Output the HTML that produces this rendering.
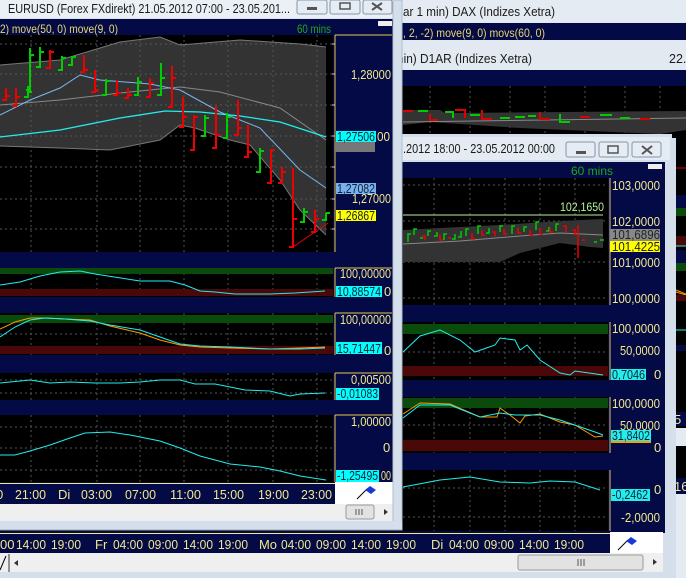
<!DOCTYPE html>
<html><head><meta charset="utf-8"><style>
html,body{margin:0;padding:0;background:#dfe7f0;width:686px;height:578px;overflow:hidden}
svg{display:block}
text{font-family:"Liberation Sans",sans-serif;font-size:12px}
.y{fill:#f2e88c;font-size:13px}
.k{fill:#123;font-size:13px}
.t{fill:#1a1a1a;font-size:12.5px}
</style></head><body>
<svg width="686" height="578" viewBox="0 0 686 578" xmlns="http://www.w3.org/2000/svg">
<rect x="0" y="0" width="686" height="578" fill="#dfe7f0"/>
<rect x="400" y="0" width="286" height="22" fill="#e4ebf2"/>
<text x="403" y="16" class="t" textLength="152" lengthAdjust="spacingAndGlyphs">ar 1 min)  DAX (Indizes Xetra)</text>
<rect x="400" y="23" width="286" height="17" fill="#030a45"/>
<text x="403" y="37" style="fill:#e8d870" textLength="142" lengthAdjust="spacingAndGlyphs">, 2, -2) move(9, 0) movs(60, 0)</text>
<rect x="400" y="41" width="286" height="28" fill="#e2e9f1"/>
<text x="397" y="63" class="t" textLength="135" lengthAdjust="spacingAndGlyphs">nin)  D1AR (Indizes Xetra)</text>
<text x="669" y="63" class="t">22.</text>
<rect x="400" y="70" width="286" height="16" fill="#030a45"/>
<rect x="400" y="86" width="286" height="52" fill="#000"/>
<g stroke="#555" stroke-dasharray="2,3"><path d="M430 86v52M470 86v52M510 86v52M545 86v52M585 86v52M625 86v52M660 86v52"/></g>
<path d="M403 110 L440 110 L445 113 L686 111 L686 130 L660 134 L520 128 L430 122 L403 125Z" fill="#333"/>
<path d="M403 122 L686 118" stroke="#888" fill="none"/>
<path d="M403 111h10M430 114v6h8M455 110h10v8M482 110v9h10M540 112v7h10M580 117h10M640 119h10" stroke="#d00" stroke-width="2" fill="none"/>
<path d="M418 111h10M445 112h8v6M470 115h10M500 118h10M515 117h10M528 116h8M560 114v8h10M600 115h12M620 118h10" stroke="#0c0" stroke-width="2" fill="none"/>
<rect x="676" y="138" width="10" height="440" fill="#000"/>
<path d="M676 168h10" stroke="#d00"/>
<rect x="676" y="195" width="10" height="20" fill="#030a45"/>
<rect x="676" y="208" width="10" height="8" fill="#0a4a0a"/>
<rect x="676" y="236" width="10" height="10" fill="#4a0808"/>
<path d="M676 246h10" stroke="#2ee"/>
<rect x="676" y="250" width="10" height="13" fill="#030a45"/>
<rect x="676" y="263" width="10" height="8" fill="#0a4a0a"/>
<path d="M676 290l10 4M676 292l10 3" stroke="#f90"/>
<rect x="676" y="295" width="10" height="6" fill="#4a0808"/>
<path d="M676 330h10" stroke="#2ee"/>
<rect x="676" y="345" width="10" height="6" fill="#030a45"/>
<rect x="676" y="412" width="10" height="14" fill="#030a45"/>
<text x="674" y="424" class="y">5</text>
<rect x="676" y="428" width="10" height="18" fill="#e4ebf2"/>
<rect x="676" y="478" width="10" height="16" fill="#030a45"/>
<text x="674" y="491" class="y">16</text>
<rect x="676" y="494" width="10" height="84" fill="#e4ebf2"/>
<rect x="670" y="138" width="6" height="440" fill="#d4dfeb"/>

<!-- middle window -->
<rect x="0" y="134" width="672" height="444" fill="#d4dfeb"/>
<rect x="400" y="137" width="270" height="23" fill="#e4ebf2"/>
<text x="403" y="153" class="t" textLength="152" lengthAdjust="spacingAndGlyphs">.2012 18:00 - 23.05.2012 00:00</text>
<g fill="#e6ecf3" stroke="#8795a8"><rect x="566" y="142" width="29" height="15" rx="2"/><rect x="599" y="142" width="29" height="15" rx="2"/><rect x="632" y="142" width="29" height="15" rx="2"/></g>
<rect x="576" y="151" width="10" height="3" fill="#555"/>
<rect x="608" y="146" width="10" height="7" fill="none" stroke="#555" stroke-width="1.5"/>
<path d="M642 146l10 8M652 146l-10 8" stroke="#555" stroke-width="2"/>
<rect x="0" y="162" width="665" height="371" fill="#030a45"/>
<text x="571" y="175" style="fill:#1ca81c" textLength="42" lengthAdjust="spacingAndGlyphs">60 mins</text>
<rect x="648" y="164" width="14" height="5" fill="#eee"/>
<rect x="0" y="178" width="608" height="127" fill="#000"/>
<rect x="0" y="322" width="608" height="58" fill="#000"/>
<rect x="0" y="397" width="608" height="56" fill="#000"/>
<rect x="0" y="470" width="608" height="61" fill="#000"/>
<g stroke="#555" stroke-dasharray="2,3">
<path d="M434 178v127M470 178v127M505 178v127M540 178v127M575 178v127M403 185h205M403 221h205M403 262h205M403 298h205"/>
<path d="M434 322v58M470 322v58M505 322v58M540 322v58M575 322v58M403 352h205"/>
<path d="M434 397v56M470 397v56M505 397v56M540 397v56M575 397v56M403 425h205"/>
<path d="M434 470v61M470 470v61M505 470v61M540 470v61M575 470v61M403 488h205M403 517h205"/>
</g>
<path d="M403 230 L440 228 L500 225 L560 221 L603 219 L603 248 L590 247 L560 243 L520 253 L500 262 L403 262Z" fill="#333"/>
<path d="M403 244 L460 241 L520 236 L560 233 L603 235" stroke="#888" fill="none"/>
<path d="M403 215h200" stroke="#b8f0a0"/>
<text x="560" y="211" style="fill:#b8f0a0" textLength="44" lengthAdjust="spacingAndGlyphs">102,1650</text>
<g stroke-width="1.5" fill="none">
<path stroke="#0c0" d="M408 242v-8h3M414 235v-6h3M420 238h3M428 236v-5h3M434 236h3v-4M444 240v-6h3M452 239h3v-5M458 237h3v-6M466 236v-7h3M478 234v-8h3M486 233h3v-5M500 232v-6h3M512 234v-8h3M524 232v-5h3M536 230v-8h3M546 231h3v-4M556 231v-7h3M594 242h3M600 240h4"/>
<path stroke="#e00" d="M422 236h3v4M440 234v6h3M448 238h3M472 233v6h3M482 230v5h3M492 232h3v4M504 229v5h3M518 228v5h3M530 230v5h3M540 228v6h3M550 228v4h3M563 226h3v6M572 230h3v5M578 225v33M582 240h3"/>
</g>
<rect x="403" y="324" width="205" height="10" fill="#0a4a0a"/>
<rect x="403" y="366" width="205" height="10" fill="#4a0808"/>
<polyline fill="none" stroke="#2ee" points="403,352 420,336 440,330 460,340 475,352 495,345 500,338 515,340 520,350 527,345 540,360 560,373 570,375 575,371 603,375"/>
<rect x="403" y="398" width="205" height="10" fill="#0a4a0a"/>
<rect x="403" y="440" width="205" height="11" fill="#4a0808"/>
<polyline fill="none" stroke="#f90" points="403,414 420,403 450,404 480,417 497,417 500,408 510,415 520,423 525,416 540,414 560,422 575,425 595,437 603,436"/>
<polyline fill="none" stroke="#2ee" points="403,418 420,405 450,405 480,417 500,413 515,415 540,415 560,420 595,432 603,435"/>
<polyline fill="none" stroke="#2ee" points="403,487 440,480 470,477 500,482 530,483 550,481 575,482 600,490"/>
<g fill="none" stroke="#e8c850"><path d="M610 178v127M610 322v58M610 397v56M610 470v61"/></g>
<text x="612" y="190" class="y" textLength="48" lengthAdjust="spacingAndGlyphs">103,0000</text>
<text x="612" y="226" class="y" textLength="48" lengthAdjust="spacingAndGlyphs">102,0000</text>
<rect x="610" y="229" width="50" height="12" fill="#888"/>
<text x="612" y="239" style="fill:#222;font-size:13px" textLength="48" lengthAdjust="spacingAndGlyphs">101,6896</text>
<rect x="610" y="241" width="50" height="11" fill="#ff0"/>
<text x="612" y="251" style="fill:#222;font-size:13px" textLength="48" lengthAdjust="spacingAndGlyphs">101,4225</text>
<text x="612" y="267" class="y" textLength="48" lengthAdjust="spacingAndGlyphs">101,0000</text>
<text x="612" y="303" class="y" textLength="48" lengthAdjust="spacingAndGlyphs">100,0000</text>
<text x="612" y="333" class="y" textLength="48" lengthAdjust="spacingAndGlyphs">100,0000</text>
<text x="620" y="355" class="y" textLength="40" lengthAdjust="spacingAndGlyphs">50,0000</text>
<rect x="611" y="369" width="35" height="11" fill="#2ee"/>
<text x="612" y="379" class="k" textLength="33" lengthAdjust="spacingAndGlyphs">0,7046</text>
<text x="654" y="379" class="y">0</text>
<text x="612" y="408" class="y" textLength="48" lengthAdjust="spacingAndGlyphs">100,0000</text>
<text x="620" y="430" class="y" textLength="40" lengthAdjust="spacingAndGlyphs">50,0000</text>
<rect x="611" y="430" width="40" height="12" fill="#2ee"/>
<rect x="611" y="441" width="40" height="2" fill="#f90"/>
<text x="612" y="440" class="k" textLength="38" lengthAdjust="spacingAndGlyphs">31,8402</text>
<text x="654" y="452" class="y">0</text>
<text x="654" y="494" class="y">0</text>
<rect x="611" y="489" width="39" height="12" fill="#2ee"/>
<text x="612" y="499" class="k" textLength="36" lengthAdjust="spacingAndGlyphs">-0,2462</text>
<text x="621" y="522" class="y" textLength="39" lengthAdjust="spacingAndGlyphs">-2,0000</text>
<rect x="0" y="531" width="610" height="22" fill="#030a45"/>
<path d="M0 533.5h610" stroke="#f2e88c"/>
<rect x="610" y="532" width="53" height="21" fill="#fff"/>
<path d="M618 550l10-10" stroke="#000"/><path d="M626 541l5-4 6 4-5 4z" fill="#1838d8"/>
<g class="y">
<text x="0" y="549" class="y">00</text>
<text x="16" y="549" class="y" textLength="30" lengthAdjust="spacingAndGlyphs">14:00</text>
<text x="51" y="549" class="y" textLength="30" lengthAdjust="spacingAndGlyphs">19:00</text>
<text x="95" y="549" class="y">Fr</text>
<text x="113" y="549" class="y" textLength="30" lengthAdjust="spacingAndGlyphs">04:00</text>
<text x="148" y="549" class="y" textLength="30" lengthAdjust="spacingAndGlyphs">09:00</text>
<text x="183" y="549" class="y" textLength="30" lengthAdjust="spacingAndGlyphs">14:00</text>
<text x="218" y="549" class="y" textLength="30" lengthAdjust="spacingAndGlyphs">19:00</text>
<text x="259" y="549" class="y" textLength="18" lengthAdjust="spacingAndGlyphs">Mo</text>
<text x="281" y="549" class="y" textLength="30" lengthAdjust="spacingAndGlyphs">04:00</text>
<text x="316" y="549" class="y" textLength="30" lengthAdjust="spacingAndGlyphs">09:00</text>
<text x="351" y="549" class="y" textLength="30" lengthAdjust="spacingAndGlyphs">14:00</text>
<text x="386" y="549" class="y" textLength="30" lengthAdjust="spacingAndGlyphs">19:00</text>
<text x="431" y="549" class="y">Di</text>
<text x="449" y="549" class="y" textLength="30" lengthAdjust="spacingAndGlyphs">04:00</text>
<text x="484" y="549" class="y" textLength="30" lengthAdjust="spacingAndGlyphs">09:00</text>
<text x="519" y="549" class="y" textLength="30" lengthAdjust="spacingAndGlyphs">14:00</text>
<text x="554" y="549" class="y" textLength="30" lengthAdjust="spacingAndGlyphs">19:00</text>
</g>
<rect x="0" y="553" width="663" height="19" fill="#efefef"/>
<rect x="518" y="555" width="125" height="15" rx="2" fill="#e2e2e2" stroke="#999"/>
<path d="M578 559v7M581 559v7M584 559v7" stroke="#555"/>
<path d="M653 559l4 3-4 3z" fill="#333"/>
<path d="M18 560l-4 3 4 3z" fill="#333"/>
<path d="M0 570l6-14" stroke="#000"/><path d="M9 554v18" stroke="#333"/>

<!-- left window -->
<rect x="0" y="0" width="402" height="530" fill="#d8e2ee"/>
<rect x="0" y="0" width="395" height="18" fill="#eaf0f6"/>
<text x="8" y="13" class="t" textLength="282" lengthAdjust="spacingAndGlyphs">EURUSD (Forex FXdirekt) 21.05.2012 07:00 - 23.05.201...</text>
<g fill="#e6ecf3" stroke="#8795a8"><rect x="297" y="0" width="30" height="14" rx="2"/><rect x="330" y="0" width="30" height="14" rx="2"/><rect x="363" y="0" width="29" height="14" rx="2"/></g>
<rect x="307" y="7" width="10" height="3" fill="#555"/>
<rect x="340" y="3" width="10" height="6" fill="none" stroke="#555" stroke-width="1.5"/>
<path d="M372 3l10 7M382 3l-10 7" stroke="#555" stroke-width="2"/>
<rect x="0" y="19" width="393" height="463" fill="#030a45"/>
<text x="0" y="33" style="fill:#e8d870" textLength="118" lengthAdjust="spacingAndGlyphs">2) move(50, 0) move(9, 0)</text>
<text x="297" y="33" style="fill:#1ca81c" textLength="34" lengthAdjust="spacingAndGlyphs">60 mins</text>
<rect x="378" y="21" width="14" height="5" fill="#eee"/>
<rect x="0" y="35" width="333" height="217" fill="#000"/>
<rect x="0" y="268" width="333" height="29" fill="#000"/>
<rect x="0" y="313" width="333" height="42" fill="#000"/>
<rect x="0" y="373" width="333" height="27" fill="#000"/>
<rect x="0" y="415" width="333" height="67" fill="#000"/>
<path d="M0 65 L60 60 L120 42 L160 37 L180 45 L240 40 L300 44 L326 47 L326 235 L300 210 L280 180 L250 145 L230 140 L195 128 L180 125 L160 140 L110 150 L60 148 L0 146Z" fill="#333"/>
<g stroke="#555" stroke-dasharray="2,3">
<path d="M31 35v217M97 35v217M140 35v217M184 35v217M228 35v217M273 35v217M317 35v217M0 44h333M0 74h333M0 105h333M0 136h333M0 167h333M0 199h333M0 229h333"/>
<path d="M31 268v29M97 268v29M140 268v29M184 268v29M228 268v29M273 268v29M317 268v29"/>
<path d="M31 313v42M97 313v42M140 313v42M184 313v42M228 313v42M273 313v42M317 313v42M0 334h333"/>
<path d="M31 373v27M97 373v27M140 373v27M184 373v27M228 373v27M273 373v27M317 373v27M0 380h333M0 393h333"/>
<path d="M31 415v67M97 415v67M140 415v67M184 415v67M228 415v67M273 415v67M317 415v67M0 427h333M0 448h333M0 470h333"/>
</g>
<path d="M0 65 L60 60 L120 42 L160 37 L180 45 L240 40 L300 44 L326 47" stroke="#777" fill="none"/>
<path d="M0 146 L60 148 L110 150 L160 140 L180 125 L195 128 L230 140 L250 145 L280 180 L300 210 L326 235" stroke="#777" fill="none"/>
<path d="M0 105 L60 100 L120 93 L180 87 L220 92 L280 108 L326 140" stroke="#888" fill="none"/>
<path d="M0 115 L30 100 L60 88 L80 75 L100 80 L150 84 L180 90 L220 112 L260 128 L300 170 L326 188" stroke="#79b8f0" fill="none"/>
<path d="M0 137 L60 130 L120 118 L165 111 L200 112 L240 116 L280 122 L326 137" stroke="#2ee" fill="none" stroke-width="1.3"/>
<g stroke-width="2" fill="none">
<path stroke="#e00" d="M6 88v12h-4M6 96h4M16 88v18h-4M16 97h4M50 50v18h-4M50 52h4M84 55v17h-4M84 70h4M95 70v22h-4M95 90h4M117 80v15h-4M117 93h4M128 88v10h-4M128 95h4M150 78v19h-4M150 83h4M172 66v41h-4M172 78h4M183 97v30h-4M183 117h4M194 115v35h-4M194 117h4M216 106v42h-4M216 135h4M238 100v35h-4M238 128h4M248 125v32h-4M248 152h4M271 149v34h-4M271 150h4M282 167v16h-4M282 172h4M293 168v79h-4M293 219h4M315 210v22h-4M315 219h4"/>
<path stroke="#0c0" d="M28 86v11h-4M28 92h4M30 48v42h-4M30 55h4M40 47v20h-4M40 52h4M62 56v14h-4M62 58h4M72 56v9h-4M72 57h4M106 79v16h-4M106 81h4M138 77v18h-4M138 82h4M161 63v32h-4M161 78h4M205 115v21h-4M205 118h4M227 113v25h-4M227 117h4M260 148v24h-4M260 151h4M304 208v14h-4M304 212h4M326 213v7h-4M326 213h4"/>
</g>
<path d="M293 247 L328 223" stroke="#e00"/>
<rect x="0" y="268" width="333" height="6" fill="#0a4a0a"/>
<rect x="0" y="289" width="333" height="7" fill="#4a0808"/>
<polyline fill="none" stroke="#2ee" points="0,285 20,282 40,276 60,272 80,271 95,274 140,281 170,281 185,285 200,291 215,292 235,294 270,294 295,293 325,291"/>
<rect x="0" y="315" width="333" height="8" fill="#0a4a0a"/>
<rect x="0" y="346" width="333" height="8" fill="#4a0808"/>
<polyline fill="none" stroke="#f90" points="0,329 15,322 30,318 45,318 65,319 90,320 110,326 140,333 160,340 180,345 200,347 230,348 270,349 300,348 325,347"/>
<polyline fill="none" stroke="#2ee" points="0,337 15,327 30,320 45,318 65,319 90,321 110,325 140,330 160,337 180,344 200,346 230,347 270,349 300,349 325,348"/>
<polyline fill="none" stroke="#2ee" points="0,383 30,380 50,383 70,382 95,383 120,383 140,382 160,380 180,380 195,384 215,384 230,387 245,390 270,391 290,396 300,394 325,393"/>
<polyline fill="none" stroke="#2ee" points="0,455 15,455 30,451 50,445 70,438 85,433 110,432 130,435 160,441 180,448 200,456 230,464 260,467 280,471 300,476 326,480"/>
<g fill="none" stroke="#e8c850"><path d="M335 35v217M335 268v29M335 313v42M335 373v27M335 415v67"/><path d="M335 35h57M335 268h57M335 313h57M335 373h57M335 415h57"/></g>
<g stroke="#ccc"><path d="M332 44h3M332 74h3M332 105h3M332 136h3M332 167h3M332 199h3M332 229h3"/></g>
<text x="351" y="79" class="y" textLength="40" lengthAdjust="spacingAndGlyphs">1,28000</text>
<rect x="335" y="142" width="40" height="10" fill="#777"/>
<rect x="336" y="131" width="40" height="11" fill="#0ff"/>
<text x="337" y="141" class="k" textLength="38" lengthAdjust="spacingAndGlyphs">1,27506</text>
<text x="377" y="141" class="y" textLength="13" lengthAdjust="spacingAndGlyphs">00</text>
<rect x="336" y="183" width="40" height="11" fill="#79b0f0"/>
<text x="337" y="193" class="k" textLength="38" lengthAdjust="spacingAndGlyphs">1,27082</text>
<text x="352" y="203" class="y" textLength="39" lengthAdjust="spacingAndGlyphs">1,27000</text>
<rect x="336" y="210" width="40" height="11" fill="#ff0"/>
<text x="337" y="220" class="k" textLength="38" lengthAdjust="spacingAndGlyphs">1,26867</text>
<text x="340" y="278" class="y" textLength="51" lengthAdjust="spacingAndGlyphs">100,00000</text>
<rect x="336" y="286" width="46" height="11" fill="#0ff"/>
<text x="337" y="296" class="k" textLength="44" lengthAdjust="spacingAndGlyphs">10,88574</text>
<text x="384" y="296" class="y">0</text>
<text x="340" y="324" class="y" textLength="51" lengthAdjust="spacingAndGlyphs">100,00000</text>
<rect x="336" y="342" width="46" height="12" fill="#0ff"/>
<text x="337" y="353" class="k" textLength="44" lengthAdjust="spacingAndGlyphs">15,71447</text>
<text x="384" y="355" class="y">0</text>
<text x="351" y="384" class="y" textLength="40" lengthAdjust="spacingAndGlyphs">0,00500</text>
<rect x="336" y="388" width="43" height="12" fill="#0ff"/>
<text x="337" y="398" class="k" textLength="41" lengthAdjust="spacingAndGlyphs">-0,01083</text>
<text x="351" y="426" class="y" textLength="40" lengthAdjust="spacingAndGlyphs">1,00000</text>
<text x="383" y="452" class="y">0</text>
<rect x="336" y="470" width="43" height="12" fill="#0ff"/>
<text x="337" y="480" class="k" textLength="41" lengthAdjust="spacingAndGlyphs">-1,25495</text>
<text x="381" y="480" class="y" textLength="10" lengthAdjust="spacingAndGlyphs">00</text>
<rect x="0" y="482" width="335" height="22" fill="#030a45"/>
<path d="M0 483.5h335" stroke="#f2e88c"/>
<rect x="335" y="482" width="58" height="22" fill="#fff"/>
<path d="M357 499l10-10" stroke="#000"/><path d="M365 490l5-4 6 4-5 4z" fill="#1838d8"/>
<text x="-4" y="499" class="y">0</text>
<text x="15" y="499" class="y" textLength="31" lengthAdjust="spacingAndGlyphs">21:00</text>
<text x="58" y="499" class="y">Di</text>
<text x="81" y="499" class="y" textLength="31" lengthAdjust="spacingAndGlyphs">03:00</text>
<text x="125" y="499" class="y" textLength="31" lengthAdjust="spacingAndGlyphs">07:00</text>
<text x="170" y="499" class="y" textLength="31" lengthAdjust="spacingAndGlyphs">11:00</text>
<text x="213" y="499" class="y" textLength="31" lengthAdjust="spacingAndGlyphs">15:00</text>
<text x="258" y="499" class="y" textLength="31" lengthAdjust="spacingAndGlyphs">19:00</text>
<text x="301" y="499" class="y" textLength="31" lengthAdjust="spacingAndGlyphs">23:00</text>
<rect x="0" y="504" width="393" height="17" fill="#efefef"/>
<rect x="346" y="505" width="28" height="14" rx="2" fill="#e2e2e2" stroke="#999"/>
<path d="M356 509v6M359 509v6M362 509v6" stroke="#555"/>
<path d="M384 509l4 3-4 3z" fill="#333"/>
<rect x="393" y="0" width="9" height="530" fill="#d4dfeb" stroke="#b0bccb"/>
<rect x="0" y="521" width="402" height="9" fill="#d4dfeb"/>
<path d="M0 530h402" stroke="#9aa8b8"/>
</svg>
</body></html>
